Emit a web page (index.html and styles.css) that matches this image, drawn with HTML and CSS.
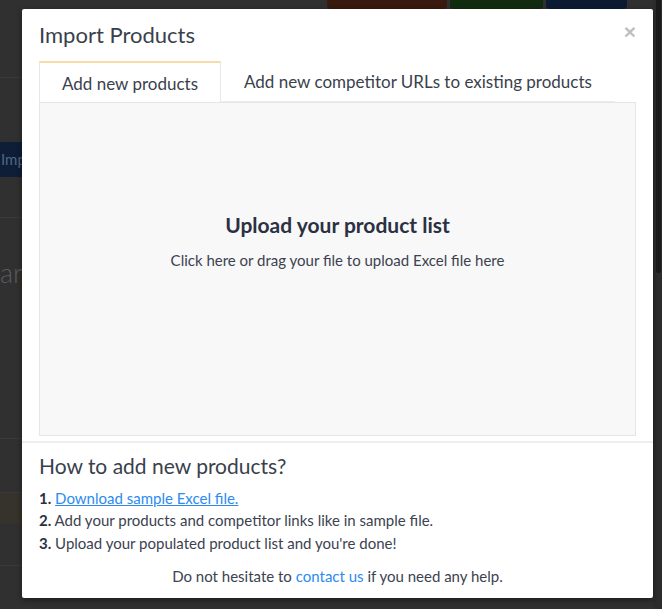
FILE: index.html
```html
<!DOCTYPE html>
<html lang="en">
<head>
<meta charset="utf-8">
<title>Import Products</title>
<link rel="stylesheet" href="styles.css">
</head>
<body>
<div class="page">
  <div class="backdrop">
    <div class="bg-top">
      <div class="bg-actions">
        <span class="bg-btn bg-red"></span>
        <span class="bg-btn bg-green"></span>
        <span class="bg-btn bg-blue"></span>
      </div>
    </div>
    <div class="bg-line bg-l1"></div>
    <div class="bg-import">Import</div>
    <div class="bg-line bg-l2"></div>
    <div class="bg-big">ar</div>
    <div class="bg-line bg-l3"></div>
    <div class="bg-line bg-l4"></div>
    <div class="bg-yellow"></div>
    <div class="bg-line bg-l5"></div>
  </div>
  <div class="scrollbar"><div class="thumb"></div></div>

  <div class="modal">
    <div class="modal-header">
      <h1 class="modal-title">Import Products</h1>
      <span class="close">&times;</span>
    </div>
    <div class="modal-body">
      <ul class="tabs">
        <li class="tab active">Add new products</li>
        <li class="tab">Add new competitor URLs to existing products</li>
      </ul>
      <div class="dropzone">
        <h2 class="dz-title">Upload your product list</h2>
        <p class="dz-text">Click here or drag your file to upload Excel file here</p>
      </div>
    </div>
    <div class="modal-footer">
      <h3 class="how-title">How to add new products?</h3>
      <ol class="steps">
        <li><b>1.</b> <a href="#" class="link underline">Download sample Excel file.</a></li>
        <li><b>2.</b> Add your products and competitor links like in sample file.</li>
        <li><b>3.</b> Upload your populated product list and you're done!</li>
      </ol>
      <p class="help">Do not hesitate to <a href="#" class="link">contact us</a> if you need any help.</p>
    </div>
  </div>
</div>
</body>
</html>
```
FILE: styles.css
```css
* { box-sizing: border-box; }
html, body { margin: 0; padding: 0; }
body {
  width: 662px;
  height: 609px;
  overflow: hidden;
  background: #303030;
  font-family: Lato, "Noto Sans", sans-serif;
}
.page {
  position: relative;
  display: flex;
  width: 662px;
  height: 609px;
}
.backdrop {
  flex: 1;
  display: flex;
  flex-direction: column;
  align-items: flex-start;
  background: #303030;
  overflow: hidden;
}
.bg-top {
  align-self: stretch;
  height: 9px;
  display: flex;
  justify-content: flex-end;
  align-items: flex-start;
  overflow: hidden;
  padding-right: 26px;
}
.bg-actions { display: flex; gap: 3px; }
.bg-btn {
  display: block;
  height: 30px;
  margin-top: -21px;
  border-radius: 4px;
}
.bg-red { width: 120px; background: #381a0e; }
.bg-green { width: 93px; background: #112b10; }
.bg-blue { width: 81px; background: #0c1b31; }
.bg-line { align-self: stretch; height: 1px; background: #3a3a3a; }
.bg-l1 { margin-top: 68px; }
.bg-import {
  margin-top: 64px;
  height: 35px;
  background: #0d1e36;
  border-radius: 0 3px 3px 0;
  color: #4f6785;
  font-size: 15px;
  line-height: 35px;
  padding: 0 14px 0 1px;
  white-space: nowrap;
}
.bg-l2 { margin-top: 40px; }
.bg-big {
  margin-top: 40px;
  color: #5a5a5a;
  font-size: 27px;
  line-height: 30px;
  font-weight: 300;
}
.bg-l3 { margin-top: 150px; }
.bg-l4 { margin-top: 53px; }
.bg-yellow { align-self: stretch; height: 31px; background: #35332b; }
.bg-l5 { margin-top: 41px; }
.scrollbar {
  width: 9px;
  background: #2c2c2c;
  display: flex;
  justify-content: center;
  padding-left: 1px;
}
.thumb {
  width: 5px;
  height: 273px;
  background: #1b1b1b;
  border-radius: 0 0 3px 3px;
}

/* modal */
.modal {
  position: absolute;
  left: 22px;
  top: 9px;
  width: 631px;
  height: 589px;
  background: #fff;
  border-radius: 2px;
  box-shadow: 0 2px 6px rgba(0, 0, 0, 0.45);
  display: flex;
  flex-direction: column;
  color: #3c4250;
}
.modal-header {
  position: relative;
  padding: 13px 17px 0;
}
.modal-title {
  margin: 0;
  font-size: 22px;
  line-height: 1.2;
  font-weight: 400;
  color: #3a3f4c;
}
.close {
  position: absolute;
  right: 17px;
  top: 10px;
  font-family: "Liberation Sans", Arial, sans-serif;
  font-size: 21px;
  font-weight: bold;
  line-height: 26px;
  color: #bfbfbf;
}
.modal-body {
  padding: 13px 17px 5px;
}
.tabs {
  list-style: none;
  margin: 0;
  padding: 0;
  display: flex;
  align-items: flex-end;
}
.tab {
  font-size: 17px;
  line-height: 1.2;
  padding: 10px 23px 9.4px;
  border-bottom: 1px solid #ececec;
  color: #3a3f4c;
  white-space: nowrap;
}
.tab.active {
  padding: 11px 22px 7.6px;
  background: #fff;
  border: 1px solid #e8e8e8;
  border-top: 2px solid #f6dca6;
  border-bottom: 0;
}
.dropzone {
  height: 334px;
  background: #f8f8f8;
  border: 1px solid #e6e6e6;
  text-align: center;
  padding-top: 109px;
}
.dz-title {
  margin: 0;
  font-size: 21px;
  line-height: 25px;
  font-weight: 700;
  color: #2b3142;
}
.dz-text {
  margin: 14px 0 0;
  font-size: 15px;
  line-height: 18px;
  color: #3c4250;
}
.modal-footer {
  border-top: 2px solid #eeeeee;
  padding: 10px 17px 0;
}
.how-title {
  margin: 0;
  font-size: 21px;
  line-height: 1.2;
  font-weight: 400;
  color: #3a3f4c;
}
.steps {
  list-style: none;
  margin: 8px 0 0;
  padding: 0;
  font-size: 15px;
  line-height: 22.5px;
}
.steps b { color: #2b3142; font-weight: 700; }
.link { color: #2b8bf0; text-decoration: none; }
.link.underline { text-decoration: underline; }
.help {
  margin: 11px 0 0;
  text-align: center;
  font-size: 15px;
  line-height: 22.5px;
}
```
